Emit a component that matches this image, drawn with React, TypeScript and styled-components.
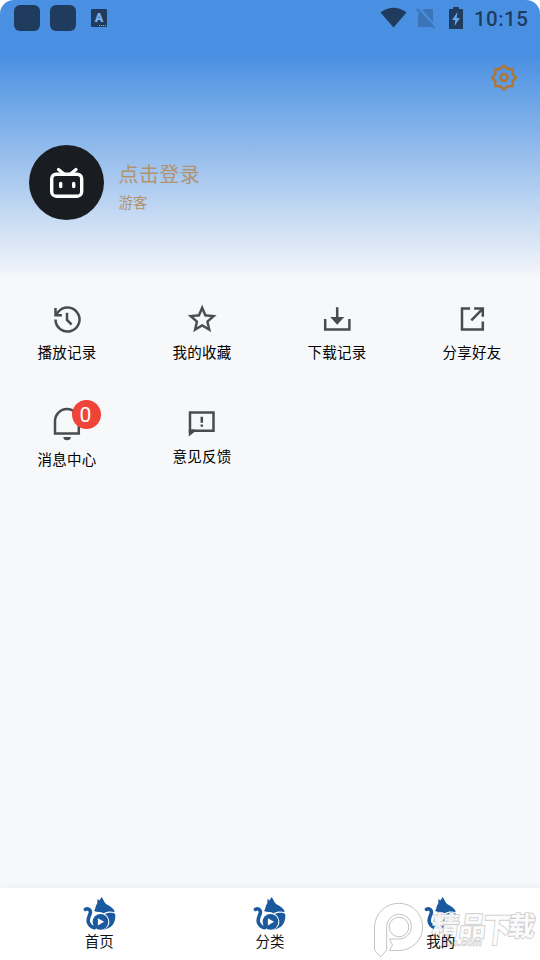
import React from "react";
import styled, { createGlobalStyle } from "styled-components";

const Global = createGlobalStyle`
  * { box-sizing: border-box; }
  body { margin: 0; background: #fff; }
`;

const Screen = styled.div`
  position: relative;
  width: 540px;
  height: 960px;
  display: flex;
  flex-direction: column;
  overflow: hidden;
  border-radius: 14px 14px 0 0;
  background: #f7f8fa;
  font-family: "Noto Sans CJK SC", sans-serif;
  font-weight: 400;
`;

const Header = styled.header`
  height: 280px;
  display: flex;
  flex-direction: column;
  background: linear-gradient(#4a90e2 0, #4a90e2 56px, #f7f8fa 280px);
`;

const StatusBar = styled.div`
  height: 36px;
  padding: 0 12px 0 14px;
  display: flex;
  align-items: center;
  color: #1f3c5f;
`;

const AppBlock = styled.span`
  width: 26px;
  height: 26px;
  margin-right: 10px;
  border-radius: 6px;
  background: #1f3c5f;
`;

const StatusIcon = styled.svg<{ $gap: number }>`
  display: block;
  flex: none;
  margin: -1px ${(p) => p.$gap}px 0 0;
`;

const LanguageTile = styled.span`
  position: relative;
  width: 16px;
  height: 18px;
  margin-left: 5px;
  border-radius: 1px;
  background: #1f3c5f;
  color: #7eb2ee;
  font: 900 12.5px/18px Roboto, sans-serif;
  text-align: center;

  &::after {
    content: "";
    position: absolute;
    right: 1px;
    bottom: 1px;
    width: 7px;
    border-bottom: 1px dotted #7eb2ee;
  }
`;

const Spacer = styled.span`
  flex: 1;
`;

const Clock = styled.time`
  width: 54px;
  font: 500 20.5px/24px Roboto, sans-serif;
  letter-spacing: 0.45px;
  white-space: nowrap;
  padding-top: 2px;
`;

const Settings = styled.button`
  align-self: flex-end;
  width: 28px;
  height: 28px;
  margin: 28px 22px 0 0;
  padding: 0;
  border: 0;
  background: none;
`;

const Profile = styled.section`
  margin: 53px 0 0 28.5px;
  display: flex;
  align-items: center;
  color: #b1946f;
`;

const Avatar = styled.div`
  width: 75px;
  height: 75px;
  border-radius: 50%;
  background: #191c20;
  display: grid;
  place-items: center;
`;

const Names = styled.div`
  margin: 8px 0 0 15px;
`;

const LoginName = styled.div`
  font-size: 20px;
  line-height: 30px;
  letter-spacing: 0.4px;
`;

const GuestName = styled.div`
  font-size: 14.5px;
  line-height: 26px;
`;

const Menu = styled.main`
  flex: 1;
  padding-top: 24px;
  display: grid;
  grid-template-columns: repeat(4, 135px);
  grid-template-rows: 104px 104px;
`;

const MenuItem = styled.div`
  display: flex;
  flex-direction: column;
  align-items: center;
`;

const IconHolder = styled.div<{ $tall?: boolean }>`
  position: relative;
  width: 32px;
  height: ${(p) => (p.$tall ? 33 : 30)}px;
  color: #4a4b4d;
`;

const MenuIcon = styled.svg`
  display: block;
  overflow: visible;
`;

const Badge = styled.span`
  position: absolute;
  left: 20px;
  top: -8px;
  width: 29px;
  height: 29px;
  border-radius: 50%;
  background: #f04438;
  color: #fff;
  font: 400 21px/30px Roboto, sans-serif;
  text-align: center;
  padding-right: 1px;
`;

const MenuLabel = styled.span`
  margin-top: 7px;
  padding-right: 1px;
  font-size: 14.5px;
  line-height: 22px;
  letter-spacing: 0.2px;
  color: #000;
`;

const TabBar = styled.nav`
  height: 72px;
  padding: 9px 14px 0;
  display: grid;
  grid-template-columns: repeat(3, 170.67px);
  background: #fff;
  box-shadow: 0 -2px 7px rgba(0, 0, 0, 0.035);
`;

const Tab = styled.div`
  display: flex;
  flex-direction: column;
  align-items: center;
`;

const TabLabel = styled.span`
  position: relative;
  z-index: 2;
  font-size: 14.5px;
  line-height: 22px;
  color: #111;
`;

const Watermark = styled.div`
  position: absolute;
  z-index: 1;
  left: 372px;
  bottom: 0;
  width: 168px;
  height: 60px;
`;

const MarkLogo = styled.svg`
  display: block;
`;

const MarkText = styled.text`
  font-family: "Noto Sans CJK SC", sans-serif;
  font-weight: 700;
  paint-order: stroke;
  fill-opacity: 0.9;
  stroke: #cfcfcf;
  stroke-width: 1.8px;
`;

const Cat = () => (
  <svg width="33" height="33" viewBox="0 0 98 101" fill="#1b599e">
    <path d="M43 5 48 11 56 0 65 17C69 24 76 24 82 29 91 36 96 41 95 47 86 43 70 44 62 50 52 44 42 48 32 43 37 39 36 27 42 20Z" />
    <path d="M65 52C79 46 90 47 97 52 100 77 88 98 58 101 74 95 82 84 78 70 76 61 72 56 65 52Z" />
    <path d="M6 38C16 32 24 42 20 52 16 62 11 70 16 80 19 87 24 92 34 94" fill="none" stroke="#1b599e" strokeWidth="11" strokeLinecap="round" />
    <circle cx="52" cy="76" r="24" />
    <path d="M44 65 63 76 44 87Z" fill="#fff" />
  </svg>
);

const icons: Record<string, React.ReactNode> = {
  history: (
    <>
      <path d="M3.9 15.5A12 12 0 1 0 6.4 8.2L3.9 11" />
      <path d="M3.9 4V11.2H10.3M15.4 8.7V16L20 20.5" />
    </>
  ),
  star: (
    <path
      transform="translate(-1.6 -2) scale(1.43)"
      fill="currentColor"
      strokeWidth=".1"
      d="M22 9.24l-7.19-.62L12 2 9.19 8.63 2 9.24l5.46 4.73L5.82 21 12 17.27 18.18 21l-1.63-7.03L22 9.24zM12 15.4l-3.76 2.27 1-4.28-3.32-2.88 4.38-.38L12 6.1l1.71 4.04 4.38.38-3.32 2.88 1 4.28L12 15.4z"
    />
  ),
  download: (
    <>
      <path d="M3.6 15V25.4H27.8V15M15.6 3.3V14" />
      <path d="M8.6 13H22.6L15.6 20.8Z" fill="currentColor" stroke="none" />
    </>
  ),
  share: <path d="M13.5 4.4H5.4V25.5H26.2V17.5M17.5 4.4H26.2V12.7M14.7 16.3 26 4.8" />,
  bell: (
    <>
      <path d="M3.4 25.4V13A11.9 11.9 0 0 1 27.2 13V25.4Z" />
      <path d="M11.8 29H19.2A3.7 3.2 0 0 1 11.8 29Z" fill="currentColor" stroke="none" />
    </>
  ),
  feedback: (
    <>
      <path d="M3.4 25V4.4H26.9V22.7H5M15.2 8.7V14.8M15.2 16.4V18.8" />
      <path d="M2.2 21.5H8.500V23.500L2.200 28.500Z" fill="currentColor" stroke="none" />
    </>
  ),
};

const items = [
  { icon: "history", label: "播放记录" },
  { icon: "star", label: "我的收藏" },
  { icon: "download", label: "下载记录" },
  { icon: "share", label: "分享好友" },
  { icon: "bell", label: "消息中心", badge: "0" },
  { icon: "feedback", label: "意见反馈" },
];

const gearPoints = Array.from({ length: 16 }, (_, i) => {
  const a = (i * Math.PI) / 8;
  const r = i % 2 ? 9.4 : 12;
  return `${14 + r * Math.sin(a)},${14 - r * Math.cos(a)}`;
}).join(" ");

export default function App() {
  return (
    <>
      <Global />
      <Screen>
        <Header>
          <StatusBar>
            <AppBlock />
            <AppBlock />
            <LanguageTile>A</LanguageTile>
            <Spacer />
            <StatusIcon $gap={9} width="27" height="21" viewBox="0 0 27 21" fill="currentColor">
              <path d="M.5 5.5C8-1 19-1 26.500 5.500L13.500 20.500Z" />
            </StatusIcon>
            <StatusIcon $gap={13} width="20" height="22" viewBox="0 0 20 22">
              <path d="M8 2H17V20H2V8Z" fill="#3b74b8" />
              <path d="M3 1 20 20" stroke="#4a90e2" strokeWidth="2" />
              <path d="M1 2 18.500 21" stroke="#3b74b8" strokeWidth="2" />
            </StatusIcon>
            <StatusIcon $gap={11} width="14" height="22" viewBox="0 0 14 22">
              <path d="M4 0H10V2H13Q14 2 14 3V22H0V3Q0 2 1 2H4Z" fill="currentColor" />
              <path d="M8.500 5 3 13H6.300L5.500 19 11 11H7.700Z" fill="#6aa4e8" />
            </StatusIcon>
            <Clock>10:15</Clock>
          </StatusBar>
          <Settings aria-label="设置">
            <svg width="28" height="28" viewBox="0 0.400 28 28" fill="none" stroke="#b27535" strokeWidth="2.5">
              <polygon points={gearPoints} strokeLinejoin="round" />
              <circle cx="14" cy="14" r="3.500" />
            </svg>
          </Settings>
          <Profile>
            <Avatar>
              <svg width="36" height="40" viewBox="0 1 36 40" fill="none" stroke="#fff" strokeWidth="3.4" strokeLinecap="round">
                <rect x="3.700" y="12.200" width="30" height="22" rx="4.500" />
                <path d="M10.500 7.500 16 12M28 7.500 22.500 12" strokeWidth="3.200" />
                <path d="M12.700 21.500V24.500M25.700 21.500V24.500" strokeWidth="3.400" />
              </svg>
            </Avatar>
            <Names>
              <LoginName>点击登录</LoginName>
              <GuestName>游客</GuestName>
            </Names>
          </Profile>
        </Header>
        <Menu>
          {items.map(({ icon, label, badge }) => (
            <MenuItem key={label}>
              <IconHolder $tall={icon === "bell"}>
                <MenuIcon width="31" height="30" viewBox="0.400 0 31 30" fill="none" stroke="currentColor" strokeWidth="2.5">
                  {icons[icon]}
                </MenuIcon>
                {badge && <Badge>{badge}</Badge>}
              </IconHolder>
              <MenuLabel>{label}</MenuLabel>
            </MenuItem>
          ))}
        </Menu>
        <TabBar>
          {["首页", "分类", "我的"].map((label) => (
            <Tab key={label}>
              <Cat />
              <TabLabel>{label}</TabLabel>
            </Tab>
          ))}
        </TabBar>
        <Watermark>
          <MarkLogo width="168" height="60" viewBox="0 0 168 60" fill="#fff" fillOpacity=".45" stroke="#c4c4c4" strokeWidth="1">
            <path d="M2.5 50V27A24.3 24.3 0 0 1 27 3.3A23.7 23.6 0 0 1 27 50.5H17.3L20.5 45 17.3 39H27A12.4 12.4 0 1 0 14.7 27V50L8.500 57Z" />
            <circle cx="27" cy="27" r="9.800" fill="none" />
            <MarkText transform="skewX(-6)" x="63" y="36" fontSize="27">精品</MarkText>
            <MarkText transform="skewX(-6)" x="114" y="42" fontSize="34" textLength="28" lengthAdjust="spacingAndGlyphs">下</MarkText>
            <MarkText transform="skewX(-6)" x="139" y="36" fontSize="27">载</MarkText>
            <text x="70" y="46" textLength="40" lengthAdjust="spacingAndGlyphs" fontFamily="Liberation Sans, sans-serif" fontWeight="700" fontStyle="italic" fontSize="11" strokeWidth=".6">jpp.com</text>
          </MarkLogo>
        </Watermark>
      </Screen>
    </>
  );
}
